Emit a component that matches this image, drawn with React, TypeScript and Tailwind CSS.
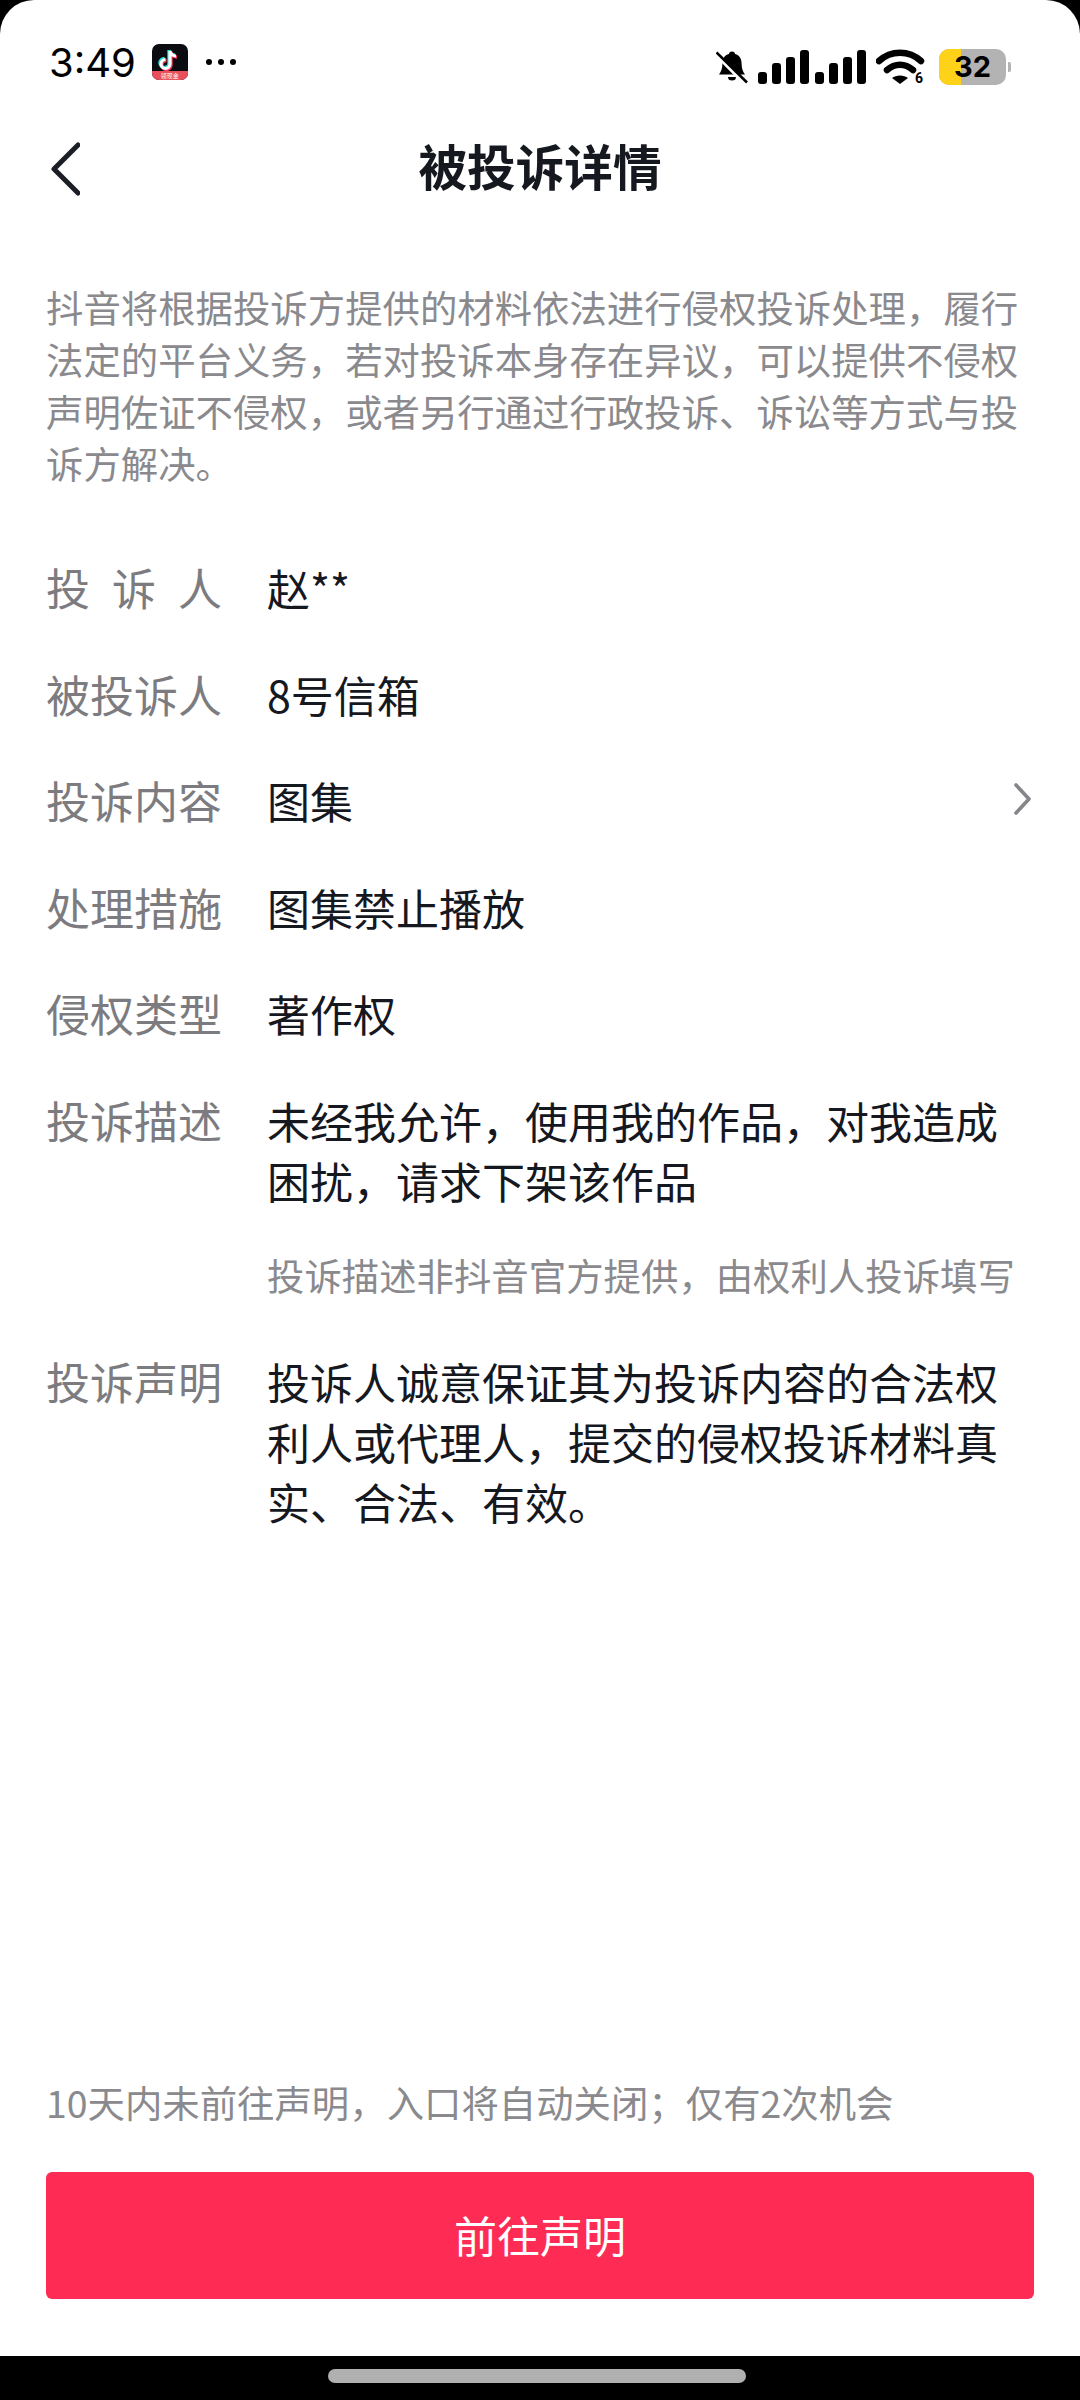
const cjk = "font-['Noto_Sans_CJK_SC','Noto_Sans',sans-serif]";

function TikTokIcon() {
  return (
    <div className="relative ml-[16px] h-[36px] w-[36px] overflow-hidden rounded-[7px] bg-[#0b0b12]">
      <svg viewBox="0 0 36 36" className="absolute left-0 top-0 h-[36px] w-[36px]">
        <path d="M18 7v13a4.500 4.500 0 1 1-4.500-4.500M18 7c.5 3 3 5 6 5" fill="none" stroke="#25d5d5" strokeWidth="3.400" transform="translate(-1 -1)" />
        <path d="M18 7v13a4.500 4.500 0 1 1-4.500-4.500M18 7c.5 3 3 5 6 5" fill="none" stroke="#f5345f" strokeWidth="3.400" transform="translate(1 1)" />
        <path d="M18 7v13a4.500 4.500 0 1 1-4.500-4.500M18 7c.5 3 3 5 6 5" fill="none" stroke="#ffffff" strokeWidth="3.200" />
      </svg>
      <div className="absolute bottom-0 left-0 flex h-[9px] w-full items-center justify-center bg-[#e9505c] text-[6px] leading-[9px] text-white">领现金</div>
    </div>
  );
}

function Bell() {
  return (
    <svg viewBox="0 0 32 34" className="h-[34px] w-[32px]">
      <path d="M16 1.500c1.800 0 3 1.200 3 2.600 4.600 1.200 6.600 5 6.600 9.400 0 5 1.200 8 3.400 11H3c2.200-3 3.400-6 3.400-11 0-4.400 2-8.200 6.600-9.400 0-1.400 1.200-2.600 3-2.600z" fill="#000" />
      <path d="M12 27h8a4 3.500 0 0 1-8 0z" fill="#000" />
      <path d="M1.500 6 29 34" stroke="#fff" strokeWidth="3.500" />
      <path d="M0.500 2.500 31 32.500" stroke="#000" strokeWidth="2.600" />
    </svg>
  );
}

function Signal() {
  const bars = [12, 21, 27, 34];
  return (
    <div className="flex h-[34px] items-end gap-[5px]">
      {bars.map((h) => (
        <div key={h} className="w-[9px] rounded-[3px] bg-black" style={{ height: h }} />
      ))}
    </div>
  );
}

function Wifi() {
  return (
    <svg viewBox="0 0 50 42" className="my-[-3px] h-[42px] w-[50px]">
      <g transform="translate(0 3)">
        <path d="M3 12C15 1 33 1 45 12" fill="none" stroke="#000" strokeWidth="6.500" strokeLinecap="round" />
        <path d="M11 21c8-7 18-7 26 0" fill="none" stroke="#000" strokeWidth="6.500" strokeLinecap="round" />
        <path d="M16 29c4-3.500 12-3.500 16 0l-8 6z" fill="#000" />
      </g>
      <text x="39" y="37" fontSize="14" fontWeight="700" fontFamily="Roboto, sans-serif" fill="#000">6</text>
    </svg>
  );
}

function Battery() {
  return (
    <div className="flex items-center gap-[2px]">
      <div className="relative flex h-[36px] w-[67px] items-center justify-center overflow-hidden rounded-[10px] bg-[#b3b3b3]">
        <div className="absolute bottom-0 left-0 top-0 w-[22px] bg-[#ffd21a]" />
        <span className="relative font-['Inter',sans-serif] text-[29px] font-bold leading-[36px] text-black">32</span>
      </div>
      <div className="h-[10px] w-[3px] rounded-r-[2px] bg-[#b3b3b3]" />
    </div>
  );
}

function Row({ label, spread, children, chevron, mt }: { label: string; spread?: boolean; children: React.ReactNode; chevron?: boolean; mt?: string }) {
  return (
    <div className={`flex items-start ${mt ?? "mt-[46.6px]"}`}>
      <div className={`w-[176px] shrink-0 text-[44px] text-[#7c7c80] ${spread ? "flex justify-between" : ""}`}>
        {spread ? label.split("").map((c) => <span key={c}>{c}</span>) : label}
      </div>
      <div className="ml-[45px] flex-1 text-[#16181f]">{children}</div>
      {chevron && (
        <svg viewBox="0 0 17 32" className="mr-[3px] mt-[13px] h-[32px] w-[17px]">
          <path d="M2 2l13 14L2 30" fill="none" stroke="#85858a" strokeWidth="3.600" strokeLinecap="round" strokeLinejoin="round" />
        </svg>
      )}
    </div>
  );
}

export default function App() {
  return (
    <div className={`flex h-[2400px] w-[1080px] flex-col bg-black ${cjk}`}>
      <div className="flex flex-1 flex-col rounded-t-[34px] bg-white px-[46px]">
        <div className="flex h-[87px] shrink-0 items-end justify-between pb-[2px]">
          <div className="flex items-center">
            <span className="ml-[3px] pt-[2px] font-['Inter',sans-serif] text-[40px] leading-[44px] text-black">3:49</span>
            <TikTokIcon />
            <div className="ml-[18px] flex gap-[6px]">
              <div className="h-[6px] w-[6px] rounded-full bg-black" />
              <div className="h-[6px] w-[6px] rounded-full bg-black" />
              <div className="h-[6px] w-[6px] rounded-full bg-black" />
            </div>
          </div>
          <div className="mr-[23px] flex items-center">
            <Bell />
            <div className="ml-[10px]"><Signal /></div>
            <div className="ml-[6px]"><Signal /></div>
            <div className="ml-[10px]"><Wifi /></div>
            <div className="ml-[13px]"><Battery /></div>
          </div>
        </div>

        <div className="relative mt-[38px] flex h-[80px] shrink-0 items-center justify-center">
          <svg viewBox="0 0 30 54" className="absolute left-[4px] top-[17px] h-[54px] w-[30px]">
            <path d="M28 3L4 27l24 24" fill="none" stroke="#1c1e26" strokeWidth="5" strokeLinecap="round" strokeLinejoin="round" />
          </svg>
          <h1 className="text-[48.600px] font-bold leading-[80px] text-[#16181f]">被投诉详情</h1>
        </div>

        <p className="mt-[76px] text-[37.400px] leading-[52px] text-[#8a8a8e]">
          抖音将根据投诉方提供的材料依法进行侵权投诉处理，履行法定的平台义务，若对投诉本身存在异议，可以提供不侵权声明佐证不侵权，或者另行通过行政投诉、诉讼等方式与投诉方解决。
        </p>

        <div className="mt-[68px] text-[43px] leading-[60px]">
          <Row label="投诉人" spread mt="mt-0">赵**</Row>
          <Row label="被投诉人">8号信箱</Row>
          <Row label="投诉内容" chevron>图集</Row>
          <Row label="处理措施">图集禁止播放</Row>
          <Row label="侵权类型">著作权</Row>
          <Row label="投诉描述">未经我允许，使用我的作品，对我造成困扰，请求下架该作品</Row>
          <div className="ml-[221px] mt-[39px] text-[37.400px] leading-[52px] text-[#8a8a8e]">投诉描述非抖音官方提供，由权利人投诉填写</div>
          <Row label="投诉声明" mt="mt-[50px]">投诉人诚意保证其为投诉内容的合法权利人或代理人，提交的侵权投诉材料真实、合法、有效。</Row>
        </div>

        <div className="flex-1" />

        <p className="text-[37.400px] leading-[52px] text-[#8a8a8e]">10天内未前往声明，入口将自动关闭；仅有2次机会</p>
        <button className="mt-[44px] h-[127px] w-full shrink-0 rounded-[6px] bg-[#fe2c55] pb-[3px] text-[43px] text-white">前往声明</button>
        <div className="h-[57px] shrink-0" />
      </div>
      <div className="flex h-[44px] shrink-0 justify-center pt-[13px]">
        <div className="mr-[7px] h-[14px] w-[418px] rounded-full bg-[#b0b0b0]" />
      </div>
    </div>
  );
}
